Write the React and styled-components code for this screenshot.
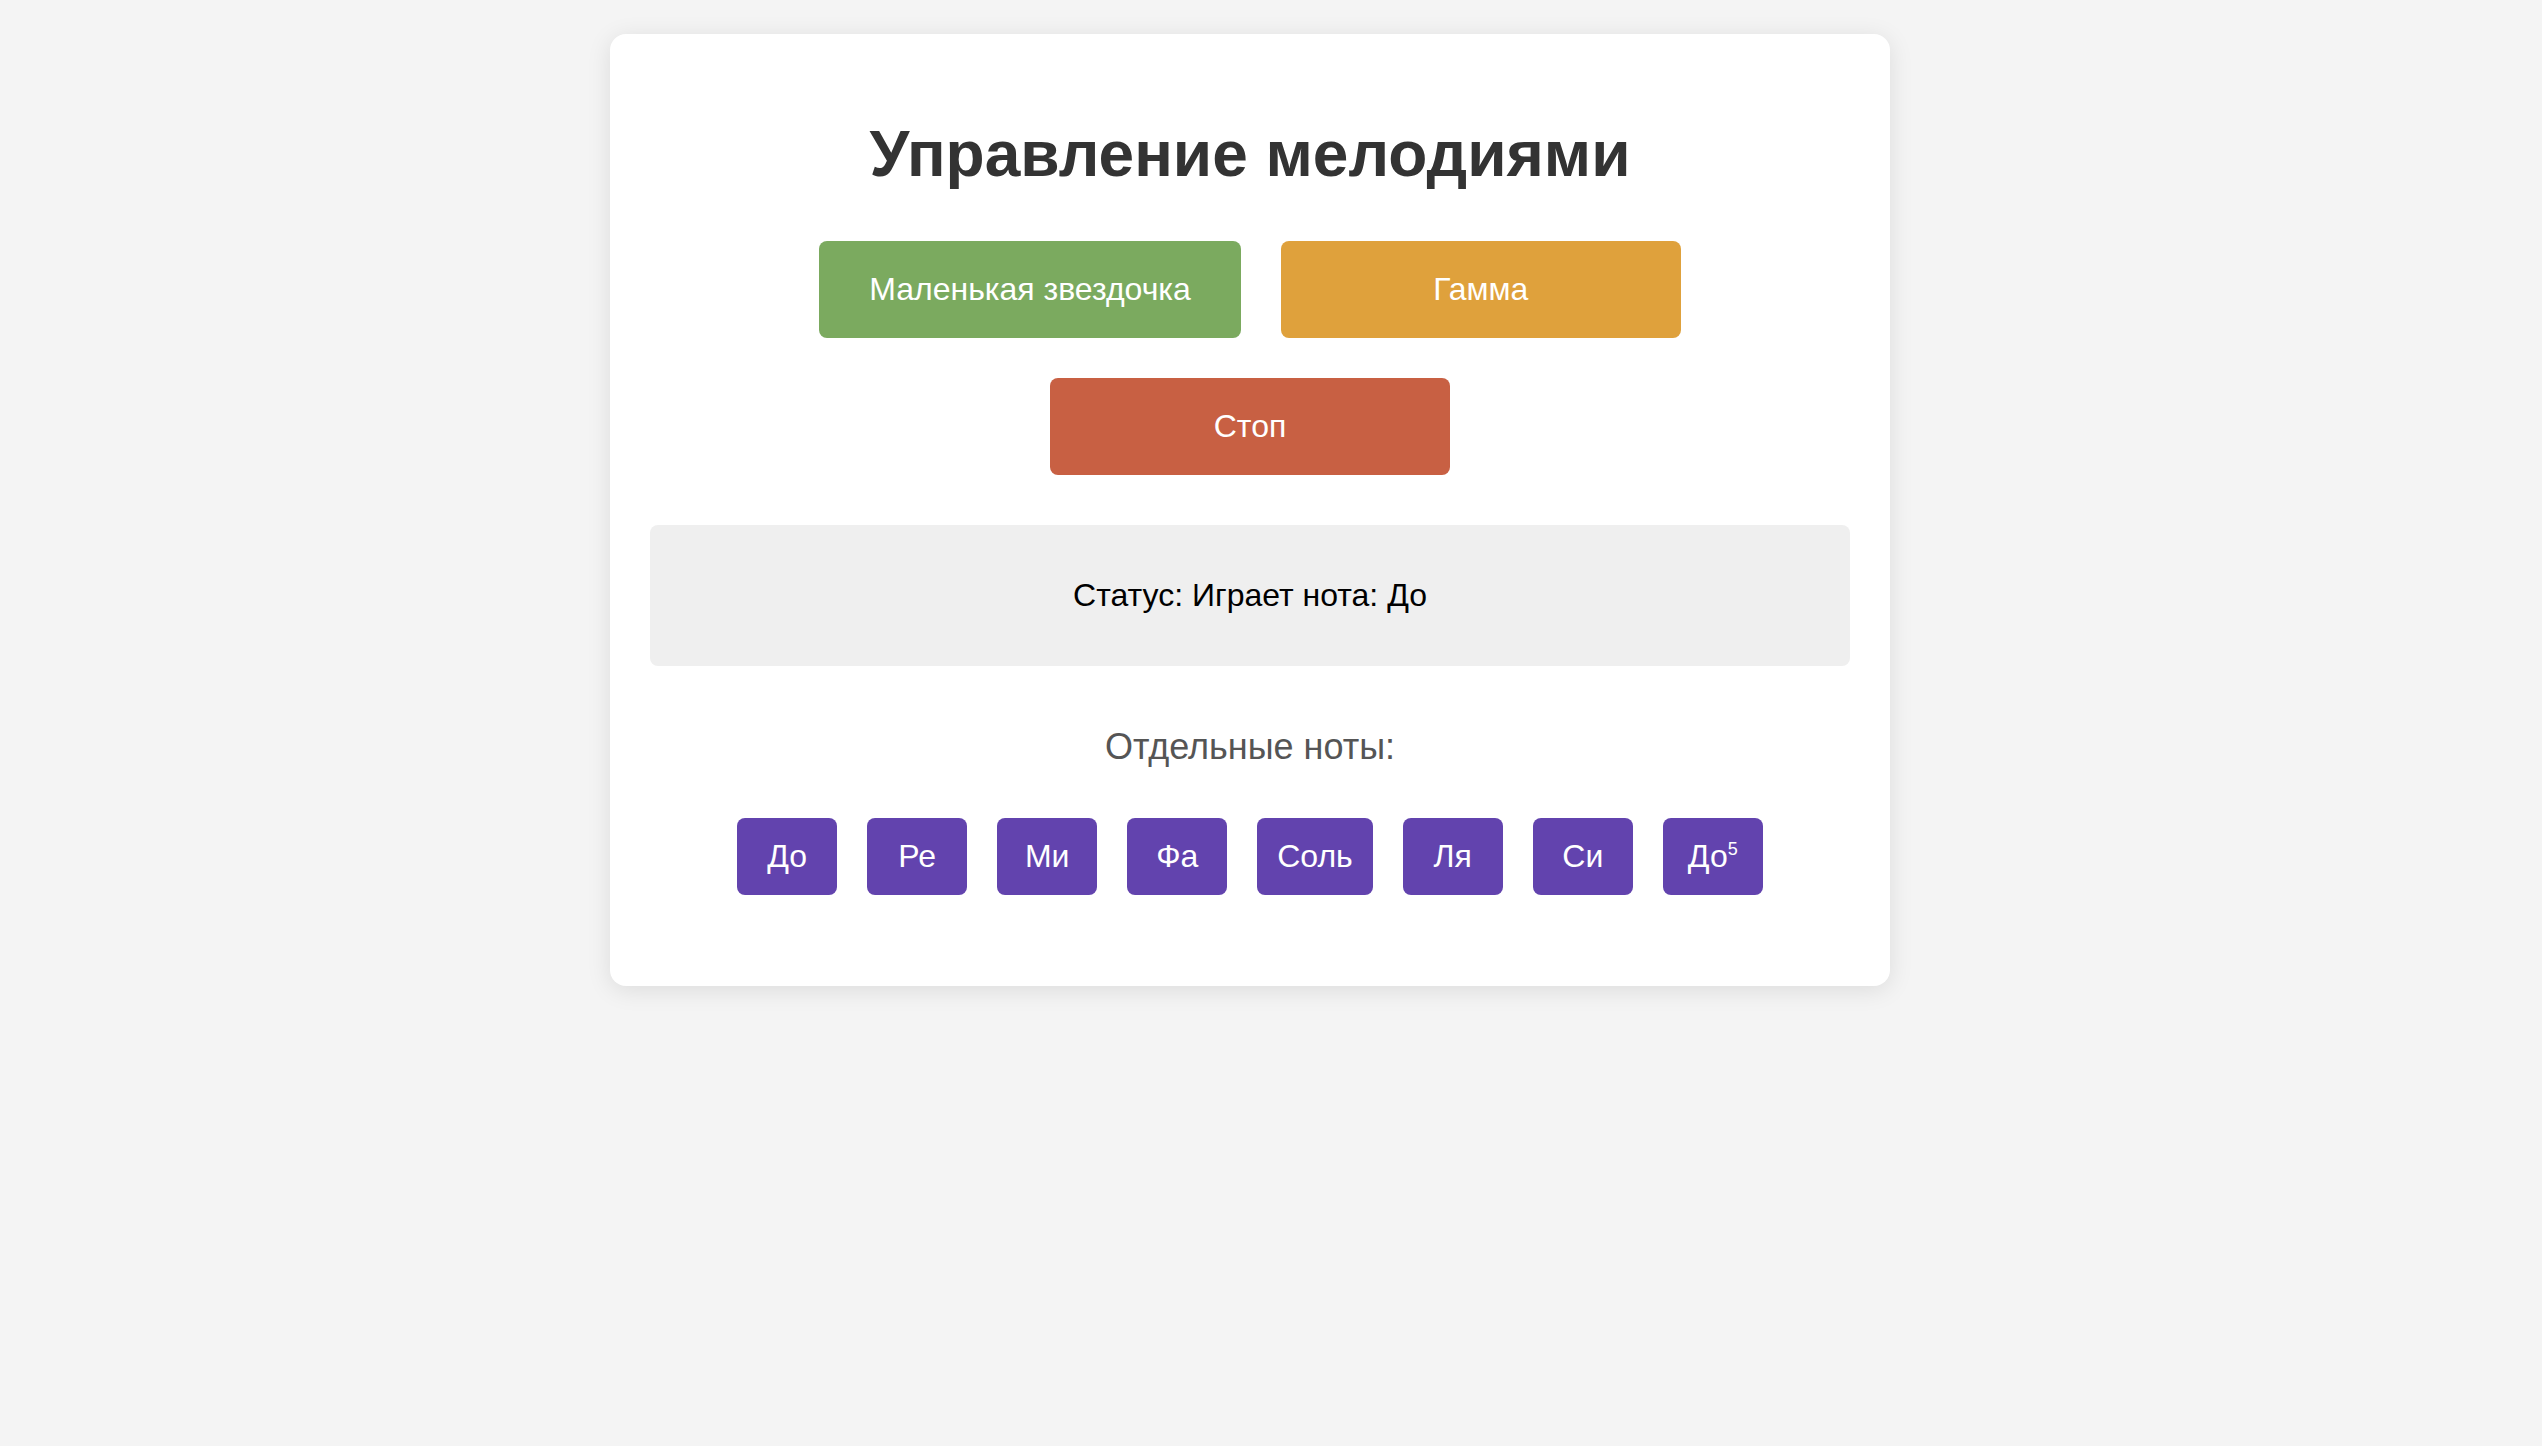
import React from "react";
import styled, { createGlobalStyle } from "styled-components";

const Global = createGlobalStyle`
  html, body {
    margin: 0;
    padding: 0;
    background: #f4f4f4;
    font-family: "Liberation Sans", Arial, sans-serif;
  }
  * { box-sizing: border-box; }
`;

const Page = styled.div`
  width: 2500px;
  padding: 34px 0;
`;

const Card = styled.div`
  width: 1280px;
  margin: 0 auto;
  padding: 40px 40px 91px;
  background: #ffffff;
  border-radius: 16px;
  box-shadow: 0 4px 24px rgba(0, 0, 0, 0.1);
  text-align: center;
`;

const Title = styled.h1`
  margin: 43px 0 50px;
  font-size: 64px;
  font-weight: bold;
  color: #333333;
  line-height: 74px;
`;

const Controls = styled.div`
  display: flex;
  flex-wrap: wrap;
  justify-content: center;
  gap: 40px;
`;

const ControlButton = styled.button`
  min-width: 400px;
  padding: 30px 50px;
  border: none;
  border-radius: 8px;
  background: ${(p) => p.$bg};
  color: #ffffff;
  font-family: "Liberation Sans", Arial, sans-serif;
  font-size: 32px;
  line-height: 37px;
  cursor: pointer;
`;

const Status = styled.div`
  margin-top: 50px;
  padding: 52px 20px;
  background: #efefef;
  border-radius: 8px;
  font-size: 32px;
  line-height: 37px;
  color: #000000;
`;

const SubTitle = styled.h3`
  margin: 61px 0 51px;
  font-size: 36px;
  font-weight: normal;
  line-height: 40px;
  color: #555555;
`;

const Notes = styled.div`
  display: flex;
  flex-wrap: wrap;
  justify-content: center;
  align-items: flex-start;
  gap: 30px;
`;

const NoteButton = styled.button`
  min-width: 100px;
  padding: 20px 20px;
  border: none;
  border-radius: 8px;
  background: #6243ae;
  color: #ffffff;
  font-family: "Liberation Sans", Arial, sans-serif;
  font-size: 32px;
  line-height: 37px;
  cursor: pointer;

  sup {
    font-size: 18px;
    line-height: 0;
  }
`;

const notes = ["До", "Ре", "Ми", "Фа", "Соль", "Ля", "Си"];

export default function App() {
  return (
    <>
      <Global />
      <Page>
        <Card>
          <Title>Управление мелодиями</Title>
          <Controls>
            <ControlButton $bg="#7baa5f">Маленькая звездочка</ControlButton>
            <ControlButton $bg="#dfa13c">Гамма</ControlButton>
            <ControlButton $bg="#c86043">Стоп</ControlButton>
          </Controls>
          <Status>Статус: Играет нота: До</Status>
          <SubTitle>Отдельные ноты:</SubTitle>
          <Notes>
            {notes.map((n) => (
              <NoteButton key={n}>{n}</NoteButton>
            ))}
            <NoteButton>
              До<sup>5</sup>
            </NoteButton>
          </Notes>
        </Card>
      </Page>
    </>
  );
}
